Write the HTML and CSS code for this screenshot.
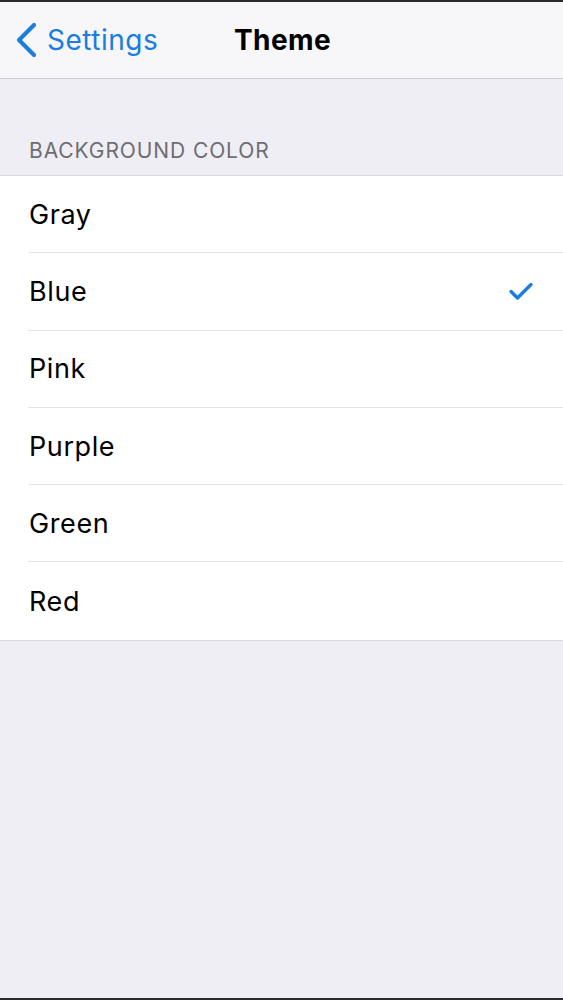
FILE: index.html
```html
<!DOCTYPE html>
<html>
<head>
<meta charset="utf-8">
<link rel="stylesheet" href="styles.css">
</head>
<body>
<div class="screen">
  <header class="nav">
    <a class="back">
      <svg class="chev" width="24" height="36" viewBox="0 0 24 36"><path d="M20 3 L5 18 L20 33" fill="none" stroke="#1a7de0" stroke-width="4.2" stroke-linecap="round" stroke-linejoin="round"/></svg>
      <span>Settings</span>
    </a>
    <h1 class="title">Theme</h1>
  </header>
  <div class="section-head">BACKGROUND COLOR</div>
  <ul class="list">
    <li class="row"><span>Gray</span></li>
    <li class="row"><span>Blue</span><svg class="check" width="26" height="20" viewBox="0 0 26 20"><path d="M3 10.5 L9.5 17 L23 3.5" fill="none" stroke="#1a7de0" stroke-width="3.4" stroke-linecap="round" stroke-linejoin="round"/></svg></li>
    <li class="row"><span>Pink</span></li>
    <li class="row"><span>Purple</span></li>
    <li class="row"><span>Green</span></li>
    <li class="row"><span>Red</span></li>
  </ul>
  <div class="rest"></div>
</div>
</body>
</html>
```
FILE: styles.css
```css
* { box-sizing: border-box; }
html, body { margin: 0; padding: 0; }
body {
  font-family: Inter, "Liberation Sans", Arial, sans-serif;
  background: #efeef4;
}
.screen {
  width: 563px;
  height: 1000px;
  display: flex;
  flex-direction: column;
  border-top: 2px solid #2a2a2c;
  border-bottom: 2px solid #2a2a2c;
  background: #efeef4;
}
.nav {
  height: 77px;
  background: #f7f7f9;
  border-bottom: 1px solid #cfcfd3;
  display: flex;
  align-items: center;
  position: relative;
  flex: none;
}
.back {
  display: flex;
  align-items: center;
  gap: 9px;
  padding-left: 14px;
  color: #1a7de0;
  font-size: 28px;
  letter-spacing: 0.5px;
}
.chev { display: block; }
.title {
  position: absolute;
  left: 234px;
  top: 0;
  height: 76px;
  margin: 0;
  display: flex;
  align-items: center;
  font-size: 28px;
  font-weight: 700;
  color: #000;
  letter-spacing: 0.4px;
}
.section-head {
  height: 97px;
  padding-left: 29px;
  padding-bottom: 12px;
  display: flex;
  align-items: flex-end;
  font-size: 21px;
  color: #6d6d72;
  letter-spacing: 0.9px;
  border-bottom: 1px solid #d8d8dc;
  flex: none;
}
.list {
  list-style: none;
  margin: 0;
  padding: 0 0 0 28px;
  background: #fff;
  border-bottom: 1px solid #d8d8dc;
  flex: none;
}
.row {
  height: 77.3px;
  display: flex;
  align-items: center;
  justify-content: space-between;
  padding-left: 1px;
  padding-right: 29px;
  font-size: 27px;
  color: #000;
  letter-spacing: 0.6px;
  border-bottom: 1px solid #e3e3e6;
}
.row:last-child { border-bottom: none; }
.check { display: block; }
.rest { flex: 1; }
```
